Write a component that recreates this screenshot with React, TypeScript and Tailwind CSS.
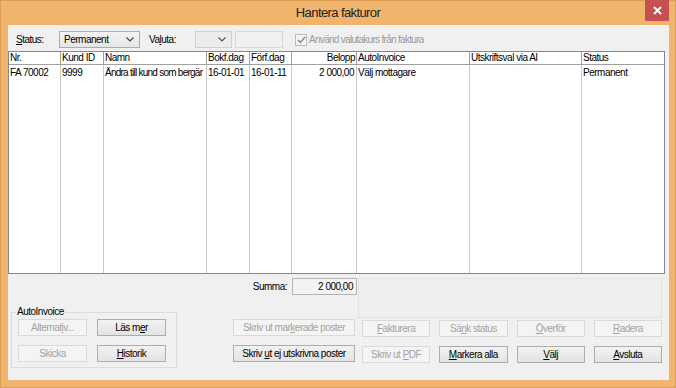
import type { ReactNode } from "react";

const font = { fontFamily: "'Liberation Sans', Arial, sans-serif" };

function Btn({
  children,
  disabled,
  className = "",
}: {
  children: ReactNode;
  disabled?: boolean;
  className?: string;
}) {
  return (
    <div
      className={`h-[17px] flex items-center justify-center border whitespace-nowrap leading-none ${
        disabled
          ? "bg-[#f4f4f4] border-[#d9d9d9] text-[#a2a2a2]"
          : "bg-linear-to-b from-[#f2f2f2] to-[#e3e3e3] border-[#adadad] text-black"
      } ${className}`}
    >
      <span>{children}</span>
    </div>
  );
}

const columns = [
  { title: "Nr.", w: "w-[52px]", cell: "FA 70002" },
  { title: "Kund ID", w: "w-[43px]", cell: "9999" },
  { title: "Namn", w: "w-[103px]", cell: "Ändra till kund som bergär", tight: true },
  { title: "Bokf.dag", w: "w-[43px]", cell: "16-01-01" },
  { title: "Förf.dag", w: "w-[42px]", cell: "16-01-11" },
  { title: "Belopp", w: "w-[65px]", cell: "2 000,00", right: true },
  { title: "AutoInvoice", w: "w-[113px]", cell: "Välj mottagare" },
  { title: "Utskriftsval via AI", w: "w-[112px]", cell: "" },
  { title: "Status", w: "flex-1", cell: "Permanent" },
];

export default function App() {
  return (
    <div
      className="w-[676px] h-[388px] bg-[#f1b46c] border border-[#dc9d56] flex flex-col text-black"
      style={font}
    >
      {/* title bar */}
      <div className="relative h-[24px] flex items-center justify-center">
        <span className="text-[13px] tracking-[-0.6px] text-[#222]">Hantera fakturor</span>
        <div className="absolute right-[6px] top-[-1px] w-[24px] h-[21px] bg-[#c75050] flex items-center justify-center">
          <svg width="9" height="9" viewBox="0 0 9 9">
            <path d="M1 1L8 8M8 1L1 8" stroke="white" strokeWidth="1.8" />
          </svg>
        </div>
      </div>

      {/* client */}
      <div className="flex-1 ml-[7px] mr-[6px] mb-[7px] bg-[#f0f0f0] flex flex-col text-[10px] tracking-[-0.5px]">
        {/* toolbar */}
        <div className="h-[17px] mt-[6px] flex items-center">
          <span className="ml-[8px] w-[43px]">
            <u>S</u>tatus:
          </span>
          <div className="w-[81px] h-[17px] border border-[#acacac] bg-linear-to-b from-[#f3f3f3] to-[#e6e6e6] flex items-center pl-[4px]">
            <span className="flex-1">Permanent</span>
            <svg width="8" height="5" viewBox="0 0 8 5" className="mr-[5px]">
              <path d="M0.5 0.5L4 4L7.5 0.5" stroke="#444" strokeWidth="1.2" fill="none" />
            </svg>
          </div>
          <span className="ml-[9px] w-[46px]">
            Va<u>l</u>uta:
          </span>
          <div className="w-[37px] h-[17px] border border-[#cfcfcf] bg-[#ececec] flex items-center justify-end">
            <svg width="8" height="5" viewBox="0 0 8 5" className="mr-[5px]">
              <path d="M0.5 0.5L4 4L7.5 0.5" stroke="#555" strokeWidth="1.2" fill="none" />
            </svg>
          </div>
          <div className="ml-[3px] w-[48px] h-[17px] border border-[#d9d9d9] bg-[#f0f0f0]" />
          <div className="ml-[12px] w-[12px] h-[12px] border border-[#bcbcbc] bg-[#f4f4f4] flex items-center justify-center">
            <svg width="9" height="8" viewBox="0 0 9 8">
              <path d="M1 4L3.5 6.5L8 1" stroke="#8a8a8a" strokeWidth="1.5" fill="none" />
            </svg>
          </div>
          <span className="ml-[2px] text-[#9a9a9a] tracking-[-0.7px]">Använd valutakurs från faktura</span>
        </div>

        {/* table */}
        <div className="mt-[3px] mr-[4px] h-[223px] border border-[#828790] bg-white flex">
          {columns.map((c, i) => (
            <div
              key={c.title}
              className={`${c.w} flex flex-col ${i < columns.length - 1 ? "border-r border-[#c8c8c8]" : ""}`}
            >
              <div
                className={`h-[13px] border-b border-[#a0a0a0] flex items-center px-[1px] leading-none whitespace-nowrap overflow-hidden ${
                  c.right ? "justify-end" : ""
                } ${i < columns.length - 1 ? "border-r border-[#a0a0a0] mr-[-1px]" : ""}`}
              >
                {c.title}
              </div>
              <div
                className={`h-[15px] flex items-center px-[1px] leading-none whitespace-nowrap overflow-hidden ${
                  c.right ? "justify-end pr-[2px]" : ""
                } ${c.tight ? "tracking-[-0.75px]" : ""}`}
              >
                {c.cell}
              </div>
            </div>
          ))}
        </div>

        {/* bottom */}
        <div className="flex mt-[4px]">
          <div className="w-[350px] flex flex-col">
            <div className="h-[17px] flex items-center justify-end pr-[1px]">
              <span className="mr-[5px]">Summa:</span>
              <div className="w-[65px] h-[17px] border border-[#b5b5b5] bg-[#f3f3f3] flex items-center justify-end pr-[3px]">
                2 000,00
              </div>
            </div>
            <div className="flex mt-[12px]">
              <fieldset className="ml-[3px] w-[166px] h-[61px] border border-[#dcdcdc] px-[6px] pt-[1px]">
                <legend className="ml-[-2px] px-[1px] leading-none">AutoInvoice</legend>
                <div className="grid grid-cols-[69px_69px] gap-x-[10px] gap-y-[9px] mt-[1px]">
                  <Btn disabled>
                    Alternat<u>i</u>v...
                  </Btn>
                  <Btn>
                    Läs m<u>e</u>r
                  </Btn>
                  <Btn disabled>Skicka</Btn>
                  <Btn>
                    <u>H</u>istorik
                  </Btn>
                </div>
              </fieldset>
              <div className="ml-auto mr-[3px] mt-[12px] flex flex-col gap-[9px]">
                <Btn disabled className="w-[122px]">
                  Skriv ut mar<u>k</u>erade poster
                </Btn>
                <Btn className="w-[122px]">
                  Skriv <u>u</u>t ej utskrivna poster
                </Btn>
              </div>
            </div>
          </div>

          <div className="w-[304px] flex flex-col">
            <div className="h-[40px] border border-[#e2e2e2] bg-[#efefef]" />
            <div className="mt-[2px] ml-[4px] grid grid-cols-4 gap-x-[9px] gap-y-[9px]">
              <Btn disabled>
                <u>F</u>akturera
              </Btn>
              <Btn disabled>
                Sä<u>n</u>k status
              </Btn>
              <Btn disabled>
                <u>Ö</u>verför
              </Btn>
              <Btn disabled>
                <u>R</u>adera
              </Btn>
              <Btn disabled>
                Skriv ut <u>P</u>DF
              </Btn>
              <Btn>
                <u>M</u>arkera alla
              </Btn>
              <Btn>
                <u>V</u>älj
              </Btn>
              <Btn>
                <u>A</u>vsluta
              </Btn>
            </div>
          </div>
        </div>
      </div>
    </div>
  );
}
